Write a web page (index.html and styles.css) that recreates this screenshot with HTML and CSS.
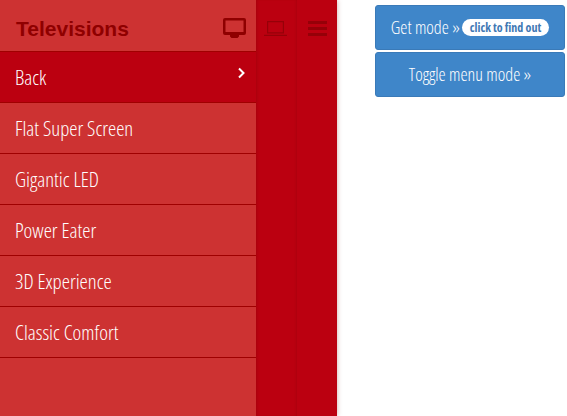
FILE: index.html
```html
<!DOCTYPE html>
<html lang="en">
<head>
<meta charset="utf-8">
<title>Televisions</title>
<link rel="stylesheet" href="styles.css">
</head>
<body>
<div class="page">
  <nav class="menu">
    <div class="panel">
      <header class="panel-head">
        <h2>Televisions</h2>
        <svg class="icon" width="23" height="20" viewBox="0 0 23 20"><path fill="#8f0000" fill-rule="evenodd" d="M2 0h19a2 2 0 0 1 2 2v13a2 2 0 0 1-2 2h-5v1.500L14.500 20h-6L7 18.500V17H2a2 2 0 0 1-2-2V2a2 2 0 0 1 2-2zm.5 2.500v11.500h18V2.500z"/></svg>
      </header>
      <ul class="items">
        <li class="item back"><span>Back</span><svg class="chev" width="9" height="12" viewBox="0 0 9 12"><path d="M2 1.500 6.500 6 2 10.500" fill="none" stroke="#fff" stroke-width="2"/></svg></li>
        <li class="item"><span>Flat Super Screen</span></li>
        <li class="item"><span>Gigantic LED</span></li>
        <li class="item"><span>Power Eater</span></li>
        <li class="item"><span>3D Experience</span></li>
        <li class="item"><span>Classic Comfort</span></li>
      </ul>
    </div>
    <div class="rail rail-a">
      <svg width="23" height="15" viewBox="0 0 23 15"><path fill="#960008" fill-rule="evenodd" d="M3 0h17v12.500H3zm1.200 1.200v10.100h14.600V1.200zM0 13.800h23V15H0z"/></svg>
    </div>
    <div class="rail rail-b">
      <svg width="19" height="15" viewBox="0 0 19 15"><path fill="#960008" d="M0 0h19v3H0zM0 6h19v3H0zM0 12h19v3H0z"/></svg>
    </div>
  </nav>
  <div class="actions">
    <button class="btn">Get mode » <span class="pill">click to find out</span></button>
    <button class="btn">Toggle menu mode »</button>
  </div>
</div>
</body>
</html>
```
FILE: styles.css
```css
* { box-sizing: border-box; }
html, body { margin: 0; height: 100%; overflow: hidden; background: #fff; }
.page { display: flex; height: 416px; width: 567px; }
.menu {
  display: flex;
  width: 337px;
  height: 100%;
  background: #bb0010;
  box-shadow: 0 0 5px rgba(120, 0, 0, .35);
  flex: none;
}
.panel { width: 256px; background: #cd3232; flex: none; }
.panel-head {
  height: 52px;
  display: flex;
  align-items: center;
  justify-content: space-between;
  padding: 6px 10px 0 16px;
  border-bottom: 1px solid #a00000;
}
.panel-head h2 {
  margin: 0;
  font: bold 21px "Liberation Sans", Arial, sans-serif;
  color: #8f0000;
}
.icon { margin-top: -1px; }
.items { list-style: none; margin: 0; padding: 0; }
.item {
  height: 51px;
  display: flex;
  align-items: center;
  justify-content: space-between;
  padding: 0 10px 0 15px;
  border-bottom: 1px solid #a00000;
  color: #fff;
  font: 300 20.8px "Open Sans", sans-serif;
  font-stretch: 75%;
}
.back { background: #bb0010; }
.chev { margin-top: -9px; }
.rail { display: flex; justify-content: center; align-items: flex-start; padding-top: 21px; }
.rail-a {
  width: 41px;
  padding-right: 2px;
  box-shadow: inset 3px 0 3px -2px rgba(100, 0, 0, .2), inset -2px 0 3px -2px rgba(100, 0, 0, .35);
}
.rail-b { width: 40px; }
.actions {
  display: flex;
  flex-direction: column;
  gap: 2px;
  margin: 5px 0 0 38px;
}
.btn {
  width: 190px;
  height: 45px;
  border: 1px solid #3a7ab8;
  border-radius: 3px;
  background: #3f86c9;
  color: #fff;
  font: 300 18px "Open Sans", sans-serif;
  font-stretch: 75%;
  padding: 0 0 2px;
  display: flex;
  align-items: center;
  justify-content: center;
  gap: 2px;
}
.pill {
  background: #fff;
  color: #3f78b4;
  border-radius: 9px;
  font: 700 12px/15px "Open Sans", sans-serif;
  font-stretch: 87%;
  padding: 1px 8px;
  margin-top: 2px;
}
```
